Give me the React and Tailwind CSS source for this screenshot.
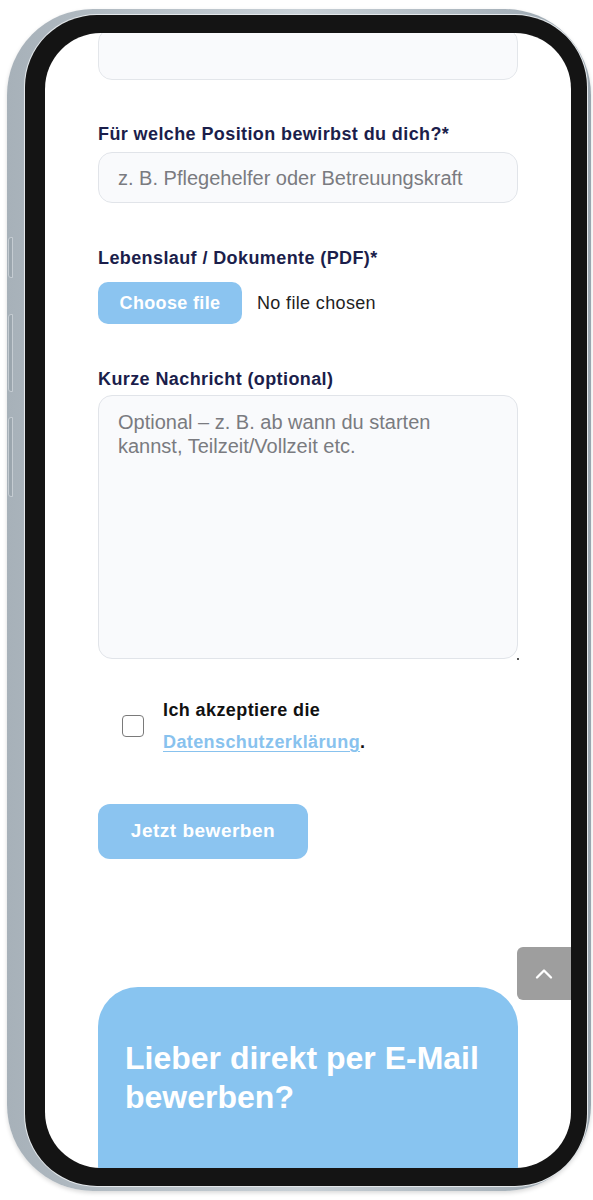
import { ChevronUp } from 'lucide-react';

function Label({ children, className = '' }) {
    return (
        <label className={`block text-[18px] leading-[24px] tracking-[0.4px] font-bold text-[#1b1e4b] ${className}`}>
            {children}
        </label>
    );
}

function PhoneFrame({ children }) {
    return (
        <div className="relative ml-[7px] mt-[9px] w-[584px] h-[1182px] rounded-[86px] bg-gradient-to-r from-[#a7b1b9] via-[#c9d1d7] to-[#9aa6af] pl-[18px] pt-[6px] pr-[4px] pb-[5px] shadow-[0_2px_4px_rgba(0,0,0,0.15)]">
            {/* side buttons */}
            <div className="absolute left-[1px] top-[228px] w-[5px] h-[41px] rounded-l-[3px] bg-[#9ba6ae] border border-[#c5ccd2]" />
            <div className="absolute left-[1px] top-[305px] w-[5px] h-[78px] rounded-l-[3px] bg-[#9ba6ae] border border-[#c5ccd2]" />
            <div className="absolute left-[1px] top-[408px] w-[5px] h-[80px] rounded-l-[3px] bg-[#9ba6ae] border border-[#c5ccd2]" />
            <div className="w-full h-full rounded-[72px] bg-[#141414] pl-[20px] pt-[18px] pr-[16px] pb-[18px] ring-1 ring-[#e4e8eb]">
                <div className="relative w-full h-full rounded-[56px] overflow-hidden bg-white">
                    {children}
                </div>
            </div>
        </div>
    );
}

export default function App() {
    return (
        <div className="w-[593px] h-[1200px] bg-white overflow-hidden font-['Liberation_Sans',Arial,sans-serif]">
            <PhoneFrame>
                <div className="px-[53px]">
                    {/* previous field, scrolled off */}
                    <div className="-mt-[5px] h-[52px] rounded-[14px] border border-[#e3e6ea] bg-[#f9fafc]" />

                    <Label className="mt-[42px]">Für welche Position bewirbst du dich?*</Label>
                    <div className="mt-[6px] h-[51px] rounded-[14px] border border-[#e1e4e9] bg-[#f9fafc] px-[19px] flex items-center">
                        <span className="text-[20px] text-[#7a7b80]">z. B. Pflegehelfer oder Betreuungskraft</span>
                    </div>

                    <Label className="mt-[43px]">Lebenslauf / Dokumente (PDF)*</Label>
                    <div className="mt-[12px] flex items-center gap-[15px]">
                        <button className="w-[144px] h-[42px] rounded-[10px] bg-[#8bc4f0] text-white text-[18px] tracking-[0.35px] font-bold">
                            Choose file
                        </button>
                        <span className="text-[18px] tracking-[0.35px] text-[#1f1f1f]">No file chosen</span>
                    </div>

                    <Label className="mt-[43px]">Kurze Nachricht (optional)</Label>
                    <div className="relative mt-[4px] h-[264px] rounded-[14px] border border-[#e1e4e9] bg-[#f9fafc] px-[19px] pt-[14px]">
                        <p className="text-[20px] leading-[24px] text-[#7a7b80]">
                            Optional – z. B. ab wann du starten<br />kannst, Teilzeit/Vollzeit etc.
                        </p>
                        <span className="absolute -right-[2px] -bottom-[2px] w-[2px] h-[2px] bg-[#555]" />
                    </div>

                    <div className="mt-[35px] flex items-center pl-[24px]">
                        <div className="w-[22px] h-[22px] rounded-[4px] border-[1.5px] border-[#7a7a7a] bg-white shrink-0" />
                        <p className="ml-[19px] text-[18px] leading-[32px] tracking-[0.4px] font-bold text-[#111]">
                            Ich akzeptiere die<br />
                            <a className="text-[#88c2ee] underline underline-offset-[3px]">Datenschutzerklärung</a>.
                        </p>
                    </div>

                    <button className="mt-[46px] w-[210px] h-[55px] rounded-[12px] bg-[#8bc4f0] text-white text-[19px] tracking-[0.5px] font-bold">
                        Jetzt bewerben
                    </button>

                    <div className="mt-[128px] h-[240px] rounded-t-[40px] bg-[#88c4f0] px-[27px] pt-[52px]">
                        <h2 className="text-[32px] leading-[39px] font-bold text-white">
                            Lieber direkt per E-Mail bewerben?
                        </h2>
                    </div>
                </div>

                {/* scroll to top */}
                <div className="absolute right-0 top-[914px] w-[54px] h-[53px] rounded-l-[6px] bg-[#9e9e9e] flex items-center justify-center">
                    <ChevronUp className="w-[28px] h-[28px] text-white" strokeWidth={2} />
                </div>
            </PhoneFrame>
        </div>
    );
}
